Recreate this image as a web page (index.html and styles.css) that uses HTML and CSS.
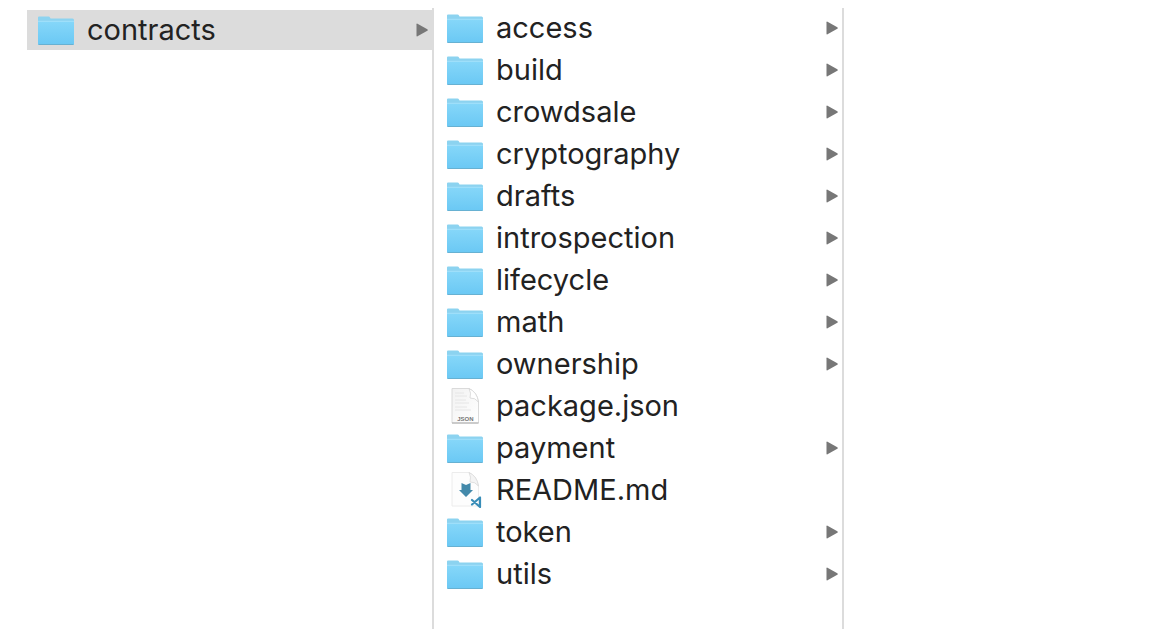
FILE: index.html
```html
<!DOCTYPE html>
<html lang="en">
<head>
<meta charset="utf-8">
<title>contracts</title>
<link rel="stylesheet" href="styles.css">
</head>
<body>
<svg class="defs" aria-hidden="true">
  <defs>
    <linearGradient id="folder-fill" x1="0" y1="0" x2="0" y2="1">
      <stop offset="0" stop-color="#86d7f9"/>
      <stop offset="1" stop-color="#6ac8f4"/>
    </linearGradient>
    <linearGradient id="paper-fill" x1="0" y1="0" x2="1" y2="1">
      <stop offset="0" stop-color="#f2f2f2"/>
      <stop offset="1" stop-color="#ffffff"/>
    </linearGradient>
    <symbol id="folder" viewBox="0 0 36 36">
      <path d="M0 8V5.500Q0 4.500 1 4.500H10.500Q11.500 4.500 12 5.500L12.500 6.500H34.500Q36 6.500 36 8V12H0Z" fill="#8cd3f0"/>
      <path d="M0 9H36V31.500Q36 33 34.500 33H1.500Q0 33 0 31.500Z" fill="url(#folder-fill)"/>
      <path d="M0 9.300H36" stroke="#a4e1fa"/>
      <path d="M.5 32.500H35.500" stroke="#67b1d2"/>
    </symbol>
    <symbol id="arrow" viewBox="0 0 12 14">
      <path d="M.5 1.200Q.5 .2 1.500 .7L11.300 6.200Q12.300 7 11.300 7.800L1.500 13.300Q.5 13.800 .5 12.800Z" fill="#777"/>
    </symbol>
    <symbol id="json" viewBox="0 0 36 36">
      <path d="M5 .5H22Q30 4 31.500 14V35H5Z" fill="url(#paper-fill)" stroke="#dadada"/>
      <path d="M5 35H31.500" stroke="#aaa"/>
      <path d="M8 5H17M8 8H20M8 12H19M8 15H22M8 19H20M8 22H24" stroke="#e6e6e6"/>
      <path d="M22 .5Q24.500 5 23 10Q28 9.500 31.500 14Q30 4 22 .5Z" fill="#fff" stroke="#d4d4d4" stroke-width=".8"/>
      <text x="18.300" y="33" class="json-label">JSON</text>
    </symbol>
    <symbol id="markdown" viewBox="0 0 36 36">
      <path d="M5 .5H22Q30 4 31.500 14V34H5Z" fill="#fdfdfd" stroke="#ececec"/>
      <path d="M22 .5Q24.500 5 23 10Q28 9.500 31.500 14Q30 4 22 .5Z" fill="#f4f4f4" stroke="#d8d8d8" stroke-width=".8"/>
      <path d="M14.500 11L19 13L23.500 11V18H26L19 25L12 18H14.500Z" fill="#4389aa"/>
      <path d="M33 25.500V35L25 28M33 25.500L25 32.500" fill="none" stroke="#388db8" stroke-width="2.200" stroke-linejoin="round" stroke-linecap="round"/>
    </symbol>
  </defs>
</svg>
<main class="browser">
  <nav class="column parent" aria-label="Parent folder">
    <ul class="list">
      <li><a class="row selected" href="#contracts"><svg class="icon"><use href="#folder"/></svg><span class="name">contracts</span><svg class="arrow"><use href="#arrow"/></svg></a></li>
    </ul>
  </nav>
  <nav class="column" aria-label="contracts">
    <ul class="list">
      <li><a class="row" href="#access"><svg class="icon"><use href="#folder"/></svg><span class="name">access</span><svg class="arrow"><use href="#arrow"/></svg></a></li>
      <li><a class="row" href="#build"><svg class="icon"><use href="#folder"/></svg><span class="name">build</span><svg class="arrow"><use href="#arrow"/></svg></a></li>
      <li><a class="row" href="#crowdsale"><svg class="icon"><use href="#folder"/></svg><span class="name">crowdsale</span><svg class="arrow"><use href="#arrow"/></svg></a></li>
      <li><a class="row" href="#cryptography"><svg class="icon"><use href="#folder"/></svg><span class="name">cryptography</span><svg class="arrow"><use href="#arrow"/></svg></a></li>
      <li><a class="row" href="#drafts"><svg class="icon"><use href="#folder"/></svg><span class="name">drafts</span><svg class="arrow"><use href="#arrow"/></svg></a></li>
      <li><a class="row" href="#introspection"><svg class="icon"><use href="#folder"/></svg><span class="name">introspection</span><svg class="arrow"><use href="#arrow"/></svg></a></li>
      <li><a class="row" href="#lifecycle"><svg class="icon"><use href="#folder"/></svg><span class="name">lifecycle</span><svg class="arrow"><use href="#arrow"/></svg></a></li>
      <li><a class="row" href="#math"><svg class="icon"><use href="#folder"/></svg><span class="name">math</span><svg class="arrow"><use href="#arrow"/></svg></a></li>
      <li><a class="row" href="#ownership"><svg class="icon"><use href="#folder"/></svg><span class="name">ownership</span><svg class="arrow"><use href="#arrow"/></svg></a></li>
      <li><a class="row" href="#package"><svg class="icon"><use href="#json"/></svg><span class="name">package.json</span></a></li>
      <li><a class="row" href="#payment"><svg class="icon"><use href="#folder"/></svg><span class="name">payment</span><svg class="arrow"><use href="#arrow"/></svg></a></li>
      <li><a class="row" href="#readme"><svg class="icon"><use href="#markdown"/></svg><span class="name">README.md</span></a></li>
      <li><a class="row" href="#token"><svg class="icon"><use href="#folder"/></svg><span class="name">token</span><svg class="arrow"><use href="#arrow"/></svg></a></li>
      <li><a class="row" href="#utils"><svg class="icon"><use href="#folder"/></svg><span class="name">utils</span><svg class="arrow"><use href="#arrow"/></svg></a></li>
    </ul>
  </nav>
  <div class="column"></div>
</main>
</body>
</html>
```
FILE: styles.css
```css
* {
  box-sizing: border-box;
}

body {
  margin: 0;
  background: #fff;
  color: #222;
  font-family: Inter, "Liberation Sans", sans-serif;
  font-size: 29px;
  line-height: 40px;
}

.defs {
  display: block;
  width: 0;
  height: 0;
}

.browser {
  display: grid;
  grid-template-columns: 407fr 410fr 309fr;
  min-height: 100vh;
  padding: 8px 0 0 27px;
}

.column {
  min-width: 0;
  border-right: 2px solid #dcdcdc;
}

.column:last-child {
  border-right: 0;
}

.parent {
  padding-top: 2px;
}

.list {
  display: grid;
  gap: 2px;
  margin: 0;
  padding: 0;
  list-style: none;
}

.row {
  display: flex;
  align-items: center;
  height: 40px;
  padding: 0 4px 0 13px;
  color: inherit;
  text-decoration: none;
}

.selected {
  padding-left: 11px;
  background: #dcdcdc;
}

.icon {
  flex: none;
  width: 36px;
  height: 36px;
  margin-right: 13px;
}

.name {
  flex: 1;
  min-width: 0;
  white-space: nowrap;
}

.arrow {
  flex: none;
  width: 12px;
  height: 14px;
}

.json-label {
  font-family: "Liberation Sans", sans-serif;
  font-size: 6px;
  font-weight: 700;
  text-anchor: middle;
  fill: #777;
}
```
